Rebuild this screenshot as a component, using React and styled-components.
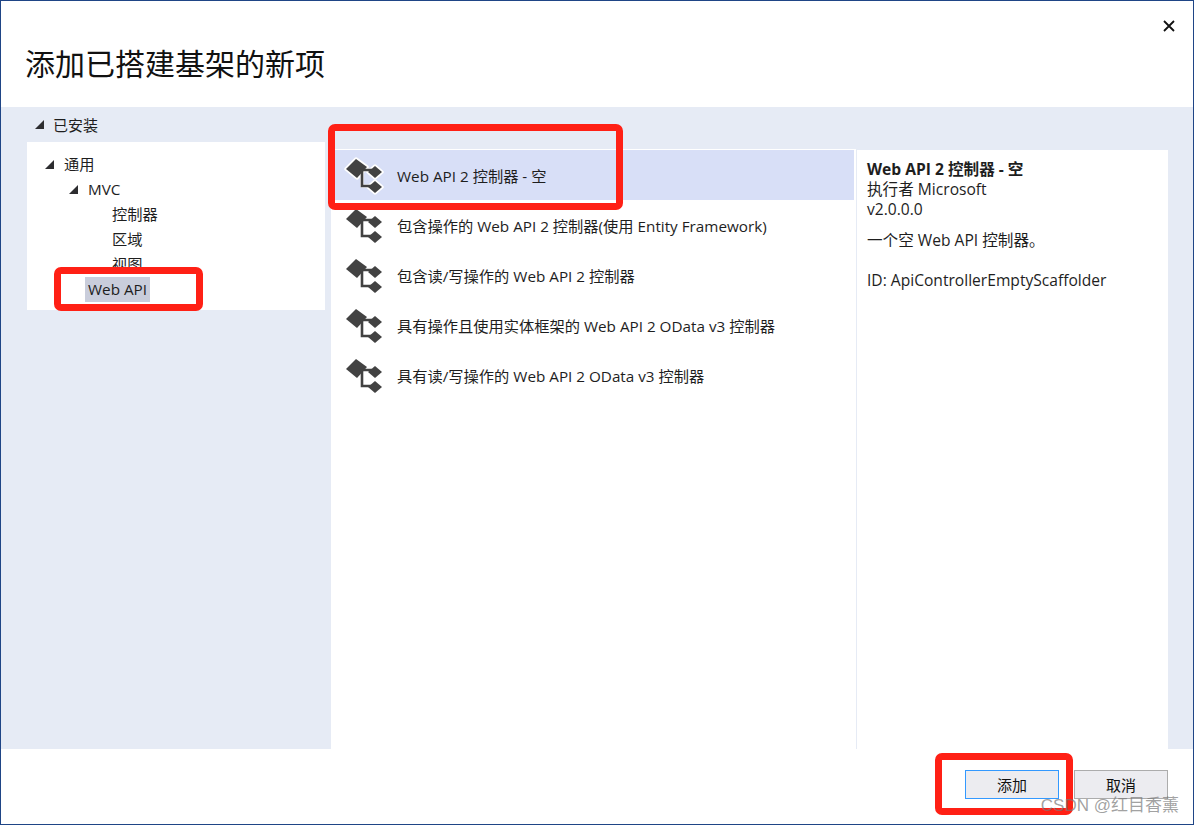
import React from 'react';
import styled, { createGlobalStyle } from 'styled-components';

const GlobalStyle = createGlobalStyle`
	html, body {
		margin: 0;
		padding: 0;
		background: white;
	}
	body {
		font-family: 'Open Sans', 'Noto Sans CJK SC', sans-serif;
		font-size: 15.25px;
		color: #1e1e1e;
	}
`;

const items = [
	'Web API 2 控制器 - 空',
	'包含操作的 Web API 2 控制器(使用 Entity Framework)',
	'包含读/写操作的 Web API 2 控制器',
	'具有操作且使用实体框架的 Web API 2 OData v3 控制器',
	'具有读/写操作的 Web API 2 OData v3 控制器',
];

const tree = [
	{ label: '通用', depth: 0, open: true },
	{ label: 'MVC', depth: 1, open: true },
	{ label: '控制器', depth: 2 },
	{ label: '区域', depth: 2 },
	{ label: '视图', depth: 2 },
	{ label: 'Web API', depth: 1, selected: true },
];

const Arrow = () => (
	<ArrowSvg viewBox="0 0 9 9">
		<polygon points="9,0 9,9 0,9" fill="#2d2d30" />
	</ArrowSvg>
);

const ScaffoldIcon = ({ halo }) => (
	<IconSvg viewBox="0 0 40 40">
		{halo && (
			<g fill="none" stroke="white" strokeWidth="3.5" strokeLinejoin="round">
				<path d="M16 14H28M18 14V30H28" />
				<polygon points="2,13 12,3 23,11 13,22" />
				<polygon points="24,16 31,10 38,16 31,22" />
				<polygon points="24,31 31,25 38,31 31,37" />
			</g>
		)}
		<path d="M16 14H28M18 14V30H28" fill="none" stroke="#424242" strokeWidth="2.6" />
		<polygon points="2,13 12,3 23,11 13,22" fill="#424242" />
		<polygon points="24,16 31,10 38,16 31,22" fill="#424242" />
		<polygon points="24,31 31,25 38,31 31,37" fill="#424242" />
	</IconSvg>
);

const App = () => (
	<Window>
		<GlobalStyle />
		<Header>
			<Title>添加已搭建基架的新项</Title>
			<CloseButton viewBox="0 0 12 12">
				<path d="M1 1L11 11M11 1L1 11" stroke="#111" strokeWidth="1.8" />
			</CloseButton>
		</Header>
		<Band>
			<LeftColumn>
				<Installed>
					<Arrow />
					<span>已安装</span>
				</Installed>
				<TreePanel>
					{tree.map((node) => (
						<TreeRow depth={node.depth} key={node.label}>
							<ArrowSlot>{node.open && <Arrow />}</ArrowSlot>
							<TreeLabel selected={node.selected}>
								{node.label}
							</TreeLabel>
						</TreeRow>
					))}
				</TreePanel>
			</LeftColumn>
			<List>
				{items.map((item, i) => (
					<ListRow active={i === 0} key={item}>
						<ScaffoldIcon halo={i === 0} />
						<span>{item}</span>
					</ListRow>
				))}
			</List>
			<Detail>
				<DetailName>Web API 2 控制器 - 空</DetailName>
				<div>执行者 Microsoft</div>
				<div>v2.0.0.0</div>
				<DetailDesc>一个空 Web API 控制器。</DetailDesc>
				<div>ID: ApiControllerEmptyScaffolder</div>
			</Detail>
		</Band>
		<Footer>
			<Button primary>添加</Button>
			<Button>取消</Button>
		</Footer>
		<RedBox x={328} y={124} w={295} h={86} />
		<RedBox x={54} y={267} w={149} h={44} />
		<RedBox x={935} y={753} w={138} h={62} />
		<Watermark>CSDN @红目香薰</Watermark>
	</Window>
);

const Window = styled.div`
	position: relative;
	box-sizing: border-box;
	width: 1194px;
	height: 825px;
	display: flex;
	flex-direction: column;
	border: 1px solid #1f4586;
	background: white;
	overflow: hidden;
`;

const Header = styled.div`
	height: 106px;
	flex: none;
	display: flex;
	align-items: flex-start;
	justify-content: space-between;
	padding: 0 18px 0 24px;
`;

const Title = styled.h1`
	margin: 42px 0 0;
	font-size: 30px;
	font-weight: 400;
	line-height: 42px;
	color: #111;
`;

const CloseButton = styled.svg`
	width: 12px;
	height: 12px;
	margin-top: 19px;
`;

const Band = styled.div`
	flex: 1;
	min-height: 0;
	display: flex;
	background: #e6ebf5;
	padding-right: 25px;
`;

const LeftColumn = styled.div`
	width: 298px;
	margin-left: 26px;
	margin-right: 6px;
	flex: none;
`;

const ArrowSvg = styled.svg`
	width: 9px;
	height: 9px;
	display: block;
`;

const Installed = styled.div`
	height: 35px;
	display: flex;
	align-items: center;
	gap: 9px;
	padding-left: 8px;
	font-size: 15px;
`;

const TreePanel = styled.div`
	height: 168px;
	box-sizing: border-box;
	padding-top: 10px;
	background: white;
	overflow: hidden;
`;

const TreeRow = styled.div`
	height: 25px;
	display: flex;
	align-items: center;
	padding-left: ${({ depth }) => 18 + depth * 24}px;
`;

const ArrowSlot = styled.span`
	width: 16px;
	flex: none;
`;

const TreeLabel = styled.span`
	padding: 0 3px;
	line-height: 25px;
	background: ${({ selected }) => (selected ? '#c9cddb' : 'transparent')};
`;

const List = styled.div`
	width: 525px;
	box-sizing: border-box;
	padding-right: 2px;
	flex: none;
	margin-top: 42px;
	border-top: 1px solid white;
	background: white;
`;

const ListRow = styled.div`
	height: 50px;
	display: flex;
	align-items: center;
	gap: 13px;
	padding-left: 13px;
	background: ${({ active }) => (active ? '#d8dff7' : 'white')};
`;

const IconSvg = styled.svg`
	width: 40px;
	height: 40px;
	flex: none;
	margin-top: 2px;
`;

const Detail = styled.div`
	flex: 1;
	margin-top: 43px;
	box-sizing: border-box;
	padding: 9px 10px 0;
	border-left: 1px solid #e6ebf5;
	background: white;
	font-size: 15.6px;
	line-height: 20px;
`;

const DetailName = styled.div`
	font-weight: 700;
`;

const DetailDesc = styled.div`
	margin: 11px 0 20px;
`;

const Footer = styled.div`
	height: 75px;
	box-sizing: border-box;
	flex: none;
	display: flex;
	justify-content: flex-end;
	align-items: flex-start;
	gap: 15px;
	padding: 21px 25px 0 0;
`;

const Button = styled.button`
	width: 94px;
	height: 29px;
	padding: 0;
	font: inherit;
	font-size: 15px;
	color: #111;
	background: #ececf0;
	border: 1px solid ${({ primary }) => (primary ? '#3399ff' : '#acacac')};
`;

const RedBox = styled.div.attrs(({ x, y, w, h }) => ({
	style: { left: x - 1, top: y - 1, width: w, height: h },
}))`
	position: absolute;
	box-sizing: border-box;
	border: 7px solid #ff2015;
	border-radius: 7px;
`;

const Watermark = styled.div`
	position: absolute;
	right: 14px;
	bottom: 7px;
	font-family: 'Liberation Sans', 'Noto Sans CJK SC', sans-serif;
	font-size: 17px;
	line-height: 22px;
	color: rgba(120, 120, 120, 0.7);
`;

export default App;
